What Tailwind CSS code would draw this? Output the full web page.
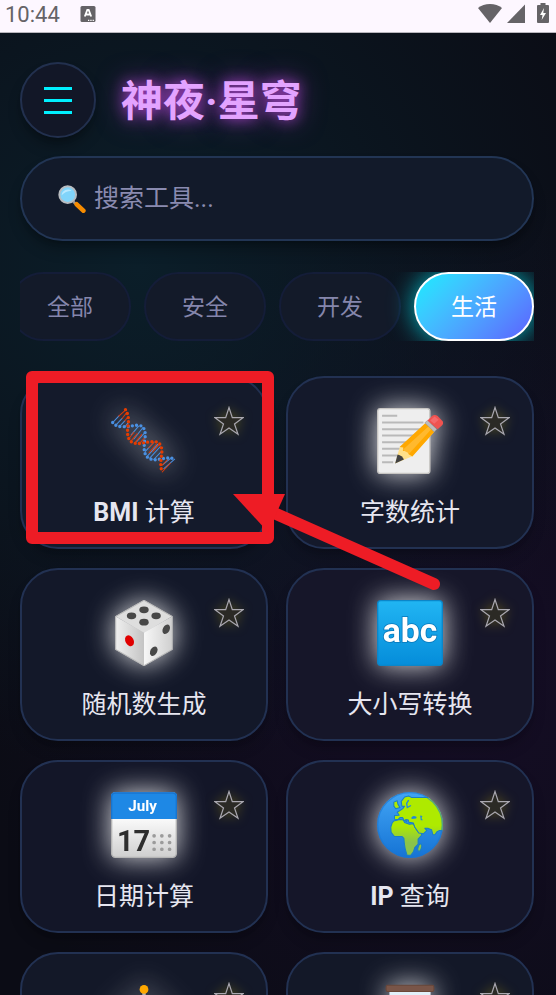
<!DOCTYPE html>
<html lang="zh-CN">
<head>
  <meta charset="UTF-8" />
  <meta name="viewport" content="width=device-width, initial-scale=1.0" />
  <title>神夜·星穹</title>
  <script src="https://cdn.jsdelivr.net/npm/@tailwindcss/browser@4"></script>
</head>
<body class="relative h-screen overflow-hidden flex flex-col font-['Roboto','Noto_Sans_CJK_SC',sans-serif] text-[#e6e6f0] bg-[#0b0c15] bg-[radial-gradient(circle_at_25%_27%,#0b1e29_0%,transparent_60%),radial-gradient(circle_at_85%_68%,#150d25_0%,transparent_60%)]">

  <!-- Status bar -->
  <div class="shrink-0 h-[33px] bg-[#fdf7ff] border-b border-[#b9b6bd] text-[#656367] flex items-start justify-between pl-[5px] pr-[7px]">
    <div class="flex items-center gap-5 h-7">
      <span class="text-[22px] leading-7 pt-[2px]">10:44</span>
      <svg class="w-4 h-4" viewBox="0 0 16 16">
        <rect x="0.5" width="15" height="16" rx="1.5" fill="currentColor"/>
        <path d="M4.8 10.500 7.300 4h1.400l2.500 6.500M5.800 8.500h4.400" fill="none" stroke="#fff" stroke-width="1.8"/>
        <path d="M8 14.300h1.300M10.300 14.300h1.300M12.600 14.300h1.300" stroke="#fff" stroke-width="1.2"/>
      </svg>
    </div>
    <div class="flex items-center h-[26px]">
      <svg class="w-6 h-5" viewBox="0 0 24 20"><path d="M12 20 0 5Q5 1 12 1t12 4z" fill="currentColor"/></svg>
      <svg class="w-[18px] h-5 ml-[5px]" viewBox="0 0 18 20"><path d="M18 1.500V20H0z" fill="currentColor"/></svg>
      <svg class="w-3 h-5 ml-3" viewBox="0 0 12 20">
        <path d="M3.500 0h5v2H11a1 1 0 0 1 1 1v16a1 1 0 0 1-1 1H1a1 1 0 0 1-1-1V3a1 1 0 0 1 1-1h2.500z" fill="currentColor"/>
        <path d="M7 5 3 12h2.500l-.8 5L9 10H6.300z" fill="#fff"/>
      </svg>
    </div>
  </div>

  <!-- Star outline shared by the cards -->
  <svg class="hidden">
    <symbol id="star" viewBox="0 0 30 30">
      <path d="M15 1.500 18.300 11.700H29L20.500 18 24 28.300 15 22 6 28.300 9.500 18 1 11.700H11.700z" fill="#2b2a25" stroke="#aaa8b0" stroke-width="1.2"/>
    </symbol>
  </svg>

  <main class="grow min-h-0 overflow-hidden pl-5 pr-[22px] pt-[29px]">
    <header class="flex items-center gap-[25px]">
      <button aria-label="菜单" class="w-[76px] h-[76px] rounded-full bg-[#121727] border-2 border-[#22304e] shadow-lg shadow-black/30 flex flex-col items-center justify-center gap-[9px]">
        <span class="w-7 h-[3px] bg-[#00f0ff]"></span>
        <span class="w-7 h-[3px] bg-[#00f0ff]"></span>
        <span class="w-7 h-[3px] bg-[#00f0ff]"></span>
      </button>
      <h1 class="pt-1 text-[42px] leading-[60px] font-bold text-[#e3a3ff] [text-shadow:0_0_14px_#c04ce0cc,0_0_28px_#a03cc8aa]">神夜·星穹</h1>
    </header>

    <label class="mt-[18px] h-[85px] rounded-full bg-[#121a2a] border-2 border-[#223554] shadow-lg shadow-black/30 flex items-center gap-2 pl-9 pr-8">
      <svg class="w-7 h-7 shrink-0" viewBox="0 0 84 84">
        <path d="m46 50 14 12" stroke="#9a9a9a" stroke-width="8"/>
        <path d="m56 58 20 19" stroke="#f78c00" stroke-width="14" stroke-linecap="round"/>
        <circle cx="29" cy="29" r="25" fill="#81d4fa" stroke="#b8bcc0" stroke-width="6"/>
        <path d="M11 31a19 19 0 0 1 30-14Q22 18 11 31z" fill="#b9e9ff"/>
      </svg>
      <input type="text" aria-label="搜索工具" placeholder="搜索工具..." class="grow min-w-0 bg-transparent outline-none text-[25px] placeholder:text-[#8a8bb0]" />
    </label>

    <!-- Category tabs, scrolled to the end -->
    <nav class="mt-[31px] h-[69px] flex justify-end gap-[13px] overflow-hidden text-[23px] text-[#8586ac]">
      <button class="shrink-0 px-9 pt-1 rounded-full border-2 border-[#141d38] bg-[#131a29]">全部</button>
      <button class="shrink-0 px-9 pt-1 rounded-full border-2 border-[#141d38] bg-[#131a29]">安全</button>
      <button class="shrink-0 px-9 pt-1 rounded-full border-2 border-[#141d38] bg-[#131a29]">开发</button>
      <button class="shrink-0 px-[35px] pt-1 rounded-full border-2 border-white text-white bg-linear-135 from-[#00f0ff] to-[#5b5bff] bg-origin-border shadow-[0_0_26px_#00e5f0cc]">生活</button>
    </nav>

    <section class="mt-[35px] grid grid-cols-2 gap-x-[18px] gap-y-[19px] text-[25px] leading-9 font-normal">
      <article class="relative rounded-[38px] border-2 border-[#223152] bg-[#141a2b] shadow-lg shadow-black/20 flex flex-col items-center gap-[21px] pt-[30px] pb-4">
        <button aria-label="收藏" class="absolute top-7 right-[22px]"><svg class="w-[30px] h-[30px] drop-shadow-[0_0_6px_#ffe00040]"><use href="#star"/></svg></button>
        <svg class="w-[66px] h-[66px] drop-shadow-[0_0_14px_#ffffffdd]" viewBox="0 0 196 196" fill="none" stroke-linecap="round">
          <g stroke-width="3">
            <path stroke="#4a90e2" d="m7 41 16-17M15 50l18-19M27 53l14-15M42 55l9-11M60 80l22-26M68 92l27-34M76 100l24-26M102 129l26-28M108 143l31-35M115 149l31-34M127 153l21-22M154 168l24-19M157 180l32-28"/>
            <path stroke="#dd3c0a" d="M23 24 43 6M33 31l14-18M41 38l10-12M52 92l16-20M58 100l20-24M70 105l21-26M85 105l15-16M112 118l15-16M113 133l22-26M124 130l18-20M152 170l16-17M152 190l24-26"/>
          </g>
          <path stroke="#4a90e2" stroke-width="10" stroke-dasharray="0 12.500" d="M5 43Q14 55 30 55C52 57 62 52 80 51 98 52 104 68 101 90 98 112 97 126 102 137 108 152 124 155 140 153 156 150 176 144 191 153"/>
          <path stroke="#e63c00" stroke-width="10" stroke-dasharray="0 12.500" d="M43 5C54 22 53 40 50 58 47 80 51 96 65 103 84 110 102 100 124 100 144 98 152 112 151 132 149 152 144 172 153 192"/>
        </svg>
        <h2><b class="font-bold">BMI</b> 计算</h2>
      </article>

      <article class="relative rounded-[38px] border-2 border-[#223152] bg-[#14192b] shadow-lg shadow-black/20 flex flex-col items-center gap-[21px] pt-[30px] pb-4">
        <button aria-label="收藏" class="absolute top-7 right-[22px]"><svg class="w-[30px] h-[30px] drop-shadow-[0_0_6px_#ffe00040]"><use href="#star"/></svg></button>
        <svg class="w-[66px] h-[66px] drop-shadow-[0_0_14px_#ffffffdd]" viewBox="0 0 196 196">
          <rect x="2" y="2" width="155" height="192" rx="8" fill="#eeeeee" stroke="#c7c5c2" stroke-width="4"/>
          <path d="M15 23h45M15 43h123M15 63h113M15 82h98M15 102h78M15 121h60M15 141h45M15 161h33" stroke="#b9b9b9" stroke-width="6"/>
          <path d="M54 165 67 118 148 46 171 69 105 143z" fill="#ffe08a"/>
          <path d="m67 116 76-71 28 25-66 74-11-7-3-10-14 1 1-11z" fill="#ffa800"/>
          <path d="m76 125 79-72 8 8-67 74z" fill="#ffb92e"/>
          <path d="m54 165 7-27q14 3 19 15z" fill="#424242"/>
          <path d="m142 44 8-7 28 26-8 8z" fill="#bdbdbd" stroke="#8c8c8c" stroke-width="1.500"/>
          <path d="m150 37 12-12q9-8 18-1l15 15q4 7-3 14l-12 10z" fill="#ef5350"/>
          <path d="m158 37 13-12 12 10-13 12z" fill="#f4696b"/>
        </svg>
        <h2>字数统计</h2>
      </article>

      <article class="relative rounded-[38px] border-2 border-[#223152] bg-[#131829] shadow-lg shadow-black/20 flex flex-col items-center gap-[21px] pt-[30px] pb-4">
        <button aria-label="收藏" class="absolute top-7 right-[22px]"><svg class="w-[30px] h-[30px] drop-shadow-[0_0_6px_#ffe00040]"><use href="#star"/></svg></button>
        <svg class="w-[66px] h-[66px] drop-shadow-[0_0_14px_#ffffffdd]" viewBox="0 0 196 196">
          <defs>
            <linearGradient id="diceLeft"><stop stop-color="#f0f0f0"/><stop offset="1" stop-color="#c4c4c4"/></linearGradient>
            <linearGradient id="diceRight"><stop stop-color="#f7f7f7"/><stop offset="1" stop-color="#cfcfcf"/></linearGradient>
          </defs>
          <path d="M98 0 182 48 98 97 13 48z" fill="#dedede"/>
          <path d="M13 48 98 97v99L13 147z" fill="url(#diceLeft)"/>
          <path d="M182 48 98 97v99l84-49z" fill="url(#diceRight)"/>
          <path d="M98 1 182 49v98l-84 48-84-48V49z" fill="none" stroke="#b9b9b9" stroke-width="3"/>
          <g fill="#484848">
            <ellipse cx="98" cy="29" rx="14" ry="10"/>
            <ellipse cx="61" cy="47" rx="14" ry="10"/>
            <ellipse cx="134" cy="47" rx="14" ry="10"/>
            <ellipse cx="98" cy="66" rx="14" ry="10"/>
            <ellipse cx="164" cy="87" rx="10" ry="15" transform="rotate(28 164 87)"/>
            <ellipse cx="127" cy="152" rx="10" ry="15" transform="rotate(28 127 152)"/>
          </g>
          <ellipse cx="55" cy="121" rx="12" ry="17" fill="#e00000" transform="rotate(-28 55 121)"/>
        </svg>
        <h2>随机数生成</h2>
      </article>

      <article class="relative rounded-[38px] border-2 border-[#223152] bg-[#161629] shadow-lg shadow-black/20 flex flex-col items-center gap-[21px] pt-[30px] pb-4">
        <button aria-label="收藏" class="absolute top-7 right-[22px]"><svg class="w-[30px] h-[30px] drop-shadow-[0_0_6px_#ffe00040]"><use href="#star"/></svg></button>
        <svg class="w-[66px] h-[66px] drop-shadow-[0_0_14px_#ffffffdd]" viewBox="0 0 196 196">
          <defs><linearGradient id="abcFill" x2="0" y2="1"><stop stop-color="#21b5f3"/><stop offset="1" stop-color="#058dda"/></linearGradient></defs>
          <rect x="2" y="2" width="192" height="192" rx="9" fill="url(#abcFill)" stroke="#0b86c9" stroke-width="4"/>
          <text x="98" y="126" text-anchor="middle" font-size="100" font-weight="700" fill="#fff" stroke="#0878bb" stroke-width="5" paint-order="stroke">abc</text>
        </svg>
        <h2>大小写转换</h2>
      </article>

      <article class="relative rounded-[38px] border-2 border-[#223152] bg-[#131628] shadow-lg shadow-black/20 flex flex-col items-center gap-[21px] pt-[30px] pb-4">
        <button aria-label="收藏" class="absolute top-7 right-[22px]"><svg class="w-[30px] h-[30px] drop-shadow-[0_0_6px_#ffe00040]"><use href="#star"/></svg></button>
        <svg class="w-[66px] h-[66px] drop-shadow-[0_0_14px_#ffffffdd]" viewBox="0 0 196 196">
          <defs><linearGradient id="calFill" x2="0" y2="1"><stop offset="0.400" stop-color="#fafafa"/><stop offset="1" stop-color="#cfcfcf"/></linearGradient></defs>
          <rect x="2" y="2" width="192" height="192" rx="11" fill="url(#calFill)" stroke="#b5b5b5" stroke-width="4"/>
          <path d="M0 80V12Q0 1 12 1h172q12 0 12 11v68z" fill="#1e88e5"/>
          <path d="M2 80V14Q2 3 13 3h170q11 0 11 11v66" fill="none" stroke="#1874cf" stroke-width="4"/>
          <text x="94" y="55" text-anchor="middle" font-size="45" font-weight="700" fill="#fff">July</text>
          <text x="67" y="176" text-anchor="middle" font-size="86" font-weight="700" fill="#2e2e2e">17</text>
          <path d="M128 130h52M128 150h52M128 170h52" stroke="#9b9b9b" stroke-width="11" stroke-linecap="round" stroke-dasharray="0 23"/>
        </svg>
        <h2>日期计算</h2>
      </article>

      <article class="relative rounded-[38px] border-2 border-[#223152] bg-[#151629] shadow-lg shadow-black/20 flex flex-col items-center gap-[21px] pt-[30px] pb-4">
        <button aria-label="收藏" class="absolute top-7 right-[22px]"><svg class="w-[30px] h-[30px] drop-shadow-[0_0_6px_#ffe00040]"><use href="#star"/></svg></button>
        <svg class="w-[66px] h-[66px] drop-shadow-[0_0_14px_#ffffffdd]" viewBox="0 0 196 196">
          <defs>
            <linearGradient id="sea" x2="0" y2="1"><stop stop-color="#42a5f5"/><stop offset="1" stop-color="#1573d4"/></linearGradient>
            <linearGradient id="land" gradientUnits="userSpaceOnUse" x1="0" y1="100" x2="0" y2="150"><stop stop-color="#aeea00"/><stop offset="1" stop-color="#8bc34a"/></linearGradient>
            <clipPath id="globe"><circle cx="98" cy="98" r="98"/></clipPath>
          </defs>
          <g clip-path="url(#globe)">
            <rect width="196" height="196" fill="url(#sea)"/>
            <g fill="url(#land)" stroke="#1a7fc4" stroke-width="3" stroke-linejoin="round">
              <path d="M45 92 50 86 68 82 78 83 82 91 96 96 108 94 113 105 122 118 134 120 131 130 122 140 122 155 112 165 108 178 100 188 89 187 84 170 81 152 80 138 74 132 52 132 42 120 41 104z"/>
              <path d="M52 81V70L66 69 60 60 76 50 82 42 74 42 72 28 82 15 94 12 102 16H160L200 50V116L186 114 178 118 172 127 166 127 162 112 152 108 142 108 148 114 138 124 124 122 112 104 108 92 95 90 93 83 85 82 88 88 80 83 76 76 68 76 62 82z"/>
              <path d="M50 30 60 26 62 36 68 46 56 50 50 42z"/>
              <ellipse cx="127" cy="165" rx="5" ry="11" transform="rotate(15 127 165)"/>
            </g>
            <path d="M102 76q4-8 16-2l-2 5-13 1zM128 70l7 1-3 6 4 7h-6z" fill="#2188dc"/>
            <path d="M94 24 88 34 90 46 101 40" fill="none" stroke="#2188dc" stroke-width="4"/>
          </g>
          <circle cx="98" cy="98" r="96" fill="none" stroke="#1976d2" stroke-opacity="0.600" stroke-width="4"/>
        </svg>
        <h2><b class="font-bold">IP</b> 查询</h2>
      </article>

      <article class="relative rounded-[38px] border-2 border-[#223152] bg-[#131828] flex flex-col items-center pt-[30px] pb-[73px]">
        <button aria-label="收藏" class="absolute top-7 right-[22px]"><svg class="w-[30px] h-[30px] drop-shadow-[0_0_6px_#ffe00040]"><use href="#star"/></svg></button>
        <svg class="w-[66px] h-[66px] drop-shadow-[0_0_14px_#ffffffdd]" viewBox="0 0 196 196">
          <path d="M93 20h10v160H93zM55 178h86v12H55z" fill="#b0b0b0"/>
          <path d="M12 52h172M32 52 8 120M32 52l24 68M164 52l-24 68M164 52l24 68" fill="none" stroke="#c8c8c8" stroke-width="5"/>
          <path d="M2 120h60q-30 34-60 0zM134 120h60q-30 34-60 0z" fill="#f9a825"/>
          <circle cx="98" cy="16" r="13" fill="#ffa800"/>
        </svg>
      </article>

      <article class="relative rounded-[38px] border-2 border-[#223152] bg-[#131828] flex flex-col items-center pt-[30px] pb-[73px]">
        <button aria-label="收藏" class="absolute top-7 right-[22px]"><svg class="w-[30px] h-[30px] drop-shadow-[0_0_6px_#ffe00040]"><use href="#star"/></svg></button>
        <svg class="w-[66px] h-[66px] drop-shadow-[0_0_14px_#ffffffdd]" viewBox="0 0 196 196">
          <path d="M37 20h122v50q-5 20-45 28 40 8 45 28v50H37v-50q5-20 45-28-40-8-45-28z" fill="#e1f1fb"/>
          <rect x="27" y="4" width="142" height="18" rx="5" fill="#795548" stroke="#6a4638" stroke-width="3"/>
          <rect x="27" y="174" width="142" height="18" rx="5" fill="#795548"/>
        </svg>
      </article>
    </section>
  </main>

  <!-- Pointer to the first tool -->
  <svg class="absolute top-0 left-0 w-full aspect-[556/995] pointer-events-none" viewBox="0 0 556 995">
    <rect x="32" y="377" width="236" height="161" fill="none" stroke="#ee1c25" stroke-width="12" stroke-linejoin="round"/>
    <path d="M434 584 265 509" stroke="#ee1c25" stroke-width="12" stroke-linecap="round"/>
    <path d="M233 494h52l-17 38z" fill="#ee1c25"/>
  </svg>
</body>
</html>
